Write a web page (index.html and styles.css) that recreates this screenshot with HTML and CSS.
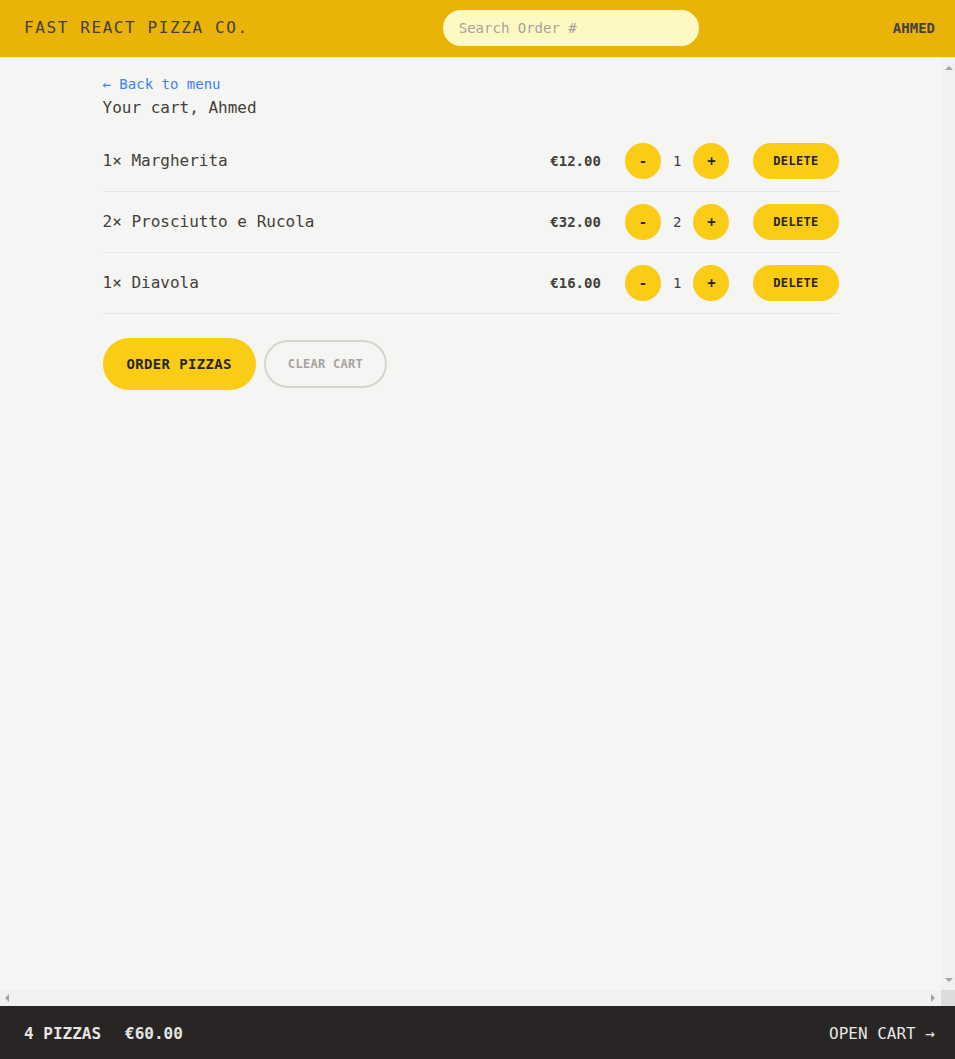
FILE: index.html
```html
<!DOCTYPE html>
<html lang="en">
<head>
<meta charset="utf-8">
<title>Fast React Pizza Co.</title>
<link rel="stylesheet" href="styles.css">
</head>
<body>
<div class="app">
  <header class="header">
    <a class="logo" href="#">Fast React Pizza Co.</a>
    <input class="search" type="text" placeholder="Search Order #">
    <div class="username">Ahmed</div>
  </header>
  <div class="viewport">
    <main class="main">
      <div class="cart">
        <a class="back" href="#">&larr; Back to menu</a>
        <h2 class="title">Your cart, Ahmed</h2>
        <ul class="items">
          <li class="item">
            <p class="name">1&times; Margherita</p>
            <div class="item-right">
              <p class="price">&euro;12.00</p>
              <div class="qty">
                <button class="btn-round">-</button>
                <span class="qty-num">1</span>
                <button class="btn-round">+</button>
              </div>
              <button class="btn-small">Delete</button>
            </div>
          </li>
          <li class="item">
            <p class="name">2&times; Prosciutto e Rucola</p>
            <div class="item-right">
              <p class="price">&euro;32.00</p>
              <div class="qty">
                <button class="btn-round">-</button>
                <span class="qty-num">2</span>
                <button class="btn-round">+</button>
              </div>
              <button class="btn-small">Delete</button>
            </div>
          </li>
          <li class="item">
            <p class="name">1&times; Diavola</p>
            <div class="item-right">
              <p class="price">&euro;16.00</p>
              <div class="qty">
                <button class="btn-round">-</button>
                <span class="qty-num">1</span>
                <button class="btn-round">+</button>
              </div>
              <button class="btn-small">Delete</button>
            </div>
          </li>
        </ul>
        <div class="actions">
          <button class="btn-primary">Order pizzas</button>
          <button class="btn-secondary">Clear cart</button>
        </div>
      </div>
    </main>
    <div class="vscroll" aria-hidden="true">
      <span class="arrow arrow-up"></span>
      <span class="arrow arrow-down"></span>
    </div>
    <div class="hscroll" aria-hidden="true">
      <span class="arrow arrow-left"></span>
      <span class="arrow arrow-right"></span>
    </div>
    <div class="corner" aria-hidden="true"></div>
  </div>
  <footer class="footer">
    <p class="summary"><span>4 pizzas</span><span>&euro;60.00</span></p>
    <a class="open-cart" href="#">Open cart &rarr;</a>
  </footer>
</div>
</body>
</html>
```
FILE: styles.css
```css
* { box-sizing: border-box; }
html, body { margin: 0; padding: 0; height: 100%; }
body {
  font-family: "DejaVu Sans Mono", "Liberation Mono", monospace;
  background: #f5f5f4;
  color: #44403c;
  font-size: 16px;
  line-height: 24px;
}
p, h2, ul { margin: 0; padding: 0; }
a { text-decoration: none; color: inherit; }
button { font-family: inherit; cursor: pointer; border: none; }

.app {
  display: grid;
  grid-template-rows: 58px 1fr 53px;
  height: 100vh;
}

.header {
  display: flex;
  align-items: flex-start;
  justify-content: space-between;
  padding: 10px 20px 0 24px;
  background: #eab308;
  border-bottom: 1px solid #e7e5e4;
  text-transform: uppercase;
}
.logo {
  letter-spacing: 0.1em;
  color: #44403c;
  line-height: 36px;
}
.search {
  width: 256px;
  height: 36px;
  border: none;
  outline: none;
  border-radius: 9999px;
  background: #fef9c3;
  padding: 8px 16px;
  font-family: inherit;
  font-size: 14px;
  color: #44403c;
}
.search::placeholder { color: #a8a29e; }
.username {
  font-size: 14px;
  font-weight: 600;
  line-height: 36px;
  color: #44403c;
}

.viewport {
  display: grid;
  grid-template-columns: 1fr 14px;
  grid-template-rows: 1fr 16px;
  min-height: 0;
}
.main {
  overflow: hidden;
  min-height: 0;
}
.vscroll {
  background: #f1f1f1;
  display: flex;
  flex-direction: column;
  justify-content: space-between;
  align-items: center;
  padding: 8px 0 8px 1px;
}
.hscroll {
  background: #f1f1f1;
  display: flex;
  justify-content: space-between;
  align-items: center;
  padding: 0 6px 0 5px;
}
.corner { background: #dcdcdc; }
.arrow { width: 0; height: 0; display: block; }
.arrow-up {
  border-left: 4px solid transparent;
  border-right: 4px solid transparent;
  border-bottom: 4px solid #a3a3a3;
}
.arrow-down {
  border-left: 4px solid transparent;
  border-right: 4px solid transparent;
  border-top: 4px solid #a3a3a3;
}
.arrow-left {
  border-top: 4px solid transparent;
  border-bottom: 4px solid transparent;
  border-right: 4px solid #a3a3a3;
}
.arrow-right {
  border-top: 4px solid transparent;
  border-bottom: 4px solid transparent;
  border-left: 4px solid #a3a3a3;
}

.cart {
  max-width: 768px;
  margin: 0 auto;
  padding: 16px 16px 12px;
}
.back {
  display: block;
  font-size: 14px;
  line-height: 20px;
  color: #3b82f6;
}
.title {
  margin-top: 2px;
  font-size: 16px;
  font-weight: 400;
  line-height: 24px;
}
.items {
  list-style: none;
  margin-top: 11px;
}
.item {
  display: flex;
  align-items: center;
  justify-content: space-between;
  padding: 12px 0;
  border-bottom: 1px solid #e7e5e4;
}
.item-right {
  display: flex;
  align-items: center;
  gap: 24px;
}
.price {
  font-size: 14px;
  font-weight: 700;
  line-height: 20px;
}
.qty {
  display: flex;
  align-items: center;
  gap: 12px;
}
.qty-num {
  font-size: 14px;
  font-weight: 500;
  line-height: 20px;
}
.btn-round {
  width: 36px;
  height: 36px;
  border-radius: 9999px;
  background: #facc15;
  color: #292524;
  font-size: 14px;
  font-weight: 600;
  line-height: 20px;
  padding: 0;
}
.btn-small {
  height: 36px;
  padding: 0 20px;
  border-radius: 9999px;
  background: #facc15;
  color: #292524;
  font-size: 12px;
  font-weight: 600;
  letter-spacing: 0.025em;
  text-transform: uppercase;
}
.actions {
  margin-top: 24px;
  display: flex;
  align-items: center;
  gap: 8px;
}
.btn-primary {
  height: 52px;
  padding: 0 24px;
  border-radius: 9999px;
  background: #facc15;
  color: #292524;
  font-size: 14px;
  font-weight: 600;
  letter-spacing: 0.025em;
  text-transform: uppercase;
}
.btn-secondary {
  height: 48px;
  padding: 0 22px;
  border-radius: 9999px;
  background: transparent;
  border: 2px solid #d6d3d1;
  color: #a8a29e;
  font-size: 12px;
  font-weight: 600;
  letter-spacing: 0.025em;
  text-transform: uppercase;
}

.footer {
  display: flex;
  align-items: flex-start;
  justify-content: space-between;
  padding: 16px 20px 0 24px;
  background: #292524;
  color: #e7e5e4;
  text-transform: uppercase;
}
.summary {
  display: flex;
  gap: 24px;
  font-weight: 600;
}
.open-cart { color: #e7e5e4; }
```
